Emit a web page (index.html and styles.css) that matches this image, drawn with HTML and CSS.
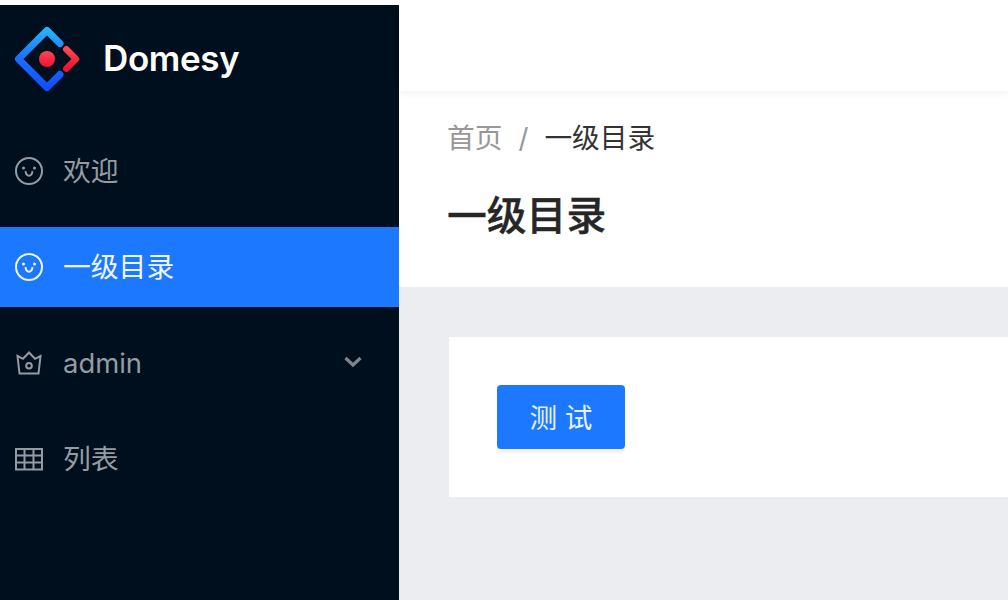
FILE: index.html
```html
<!DOCTYPE html>
<html lang="zh-CN">
<head>
    <meta charset="utf-8">
    <title>Domesy</title>
    <meta name="viewport" content="width=device-width, initial-scale=1">
    <link rel="stylesheet" href="styles.css">
</head>
<body>
    <div class="layout">
        <aside class="sider">
            <div class="logo">
                <svg class="logo-icon" width="66" height="66" viewBox="0 0 66 66" fill="none" stroke-linecap="round" stroke-linejoin="round">
                    <defs>
                        <linearGradient id="blue" x1="0" y1="0" x2="0" y2="1">
                            <stop offset="0" stop-color="#29b0fa"/>
                            <stop offset="0.5" stop-color="#1b6dff"/>
                            <stop offset="1" stop-color="#0f50ff"/>
                        </linearGradient>
                        <linearGradient id="red" x1="0" y1="0" x2="0" y2="1">
                            <stop offset="0" stop-color="#fa4655"/>
                            <stop offset="1" stop-color="#f01130"/>
                        </linearGradient>
                    </defs>
                    <path d="M46 17.500 33 4.500 4.500 33 33 61.500 46 48.500" stroke="url(#blue)" stroke-width="7"/>
                    <path d="M52.300 23.300 62 33 52.300 42.700" stroke="url(#red)" stroke-width="6.500"/>
                    <circle cx="33" cy="33" r="8" fill="url(#red)"/>
                </svg>
                <h1>Domesy</h1>
            </div>
            <ul class="menu">
                <li class="menu-item">
                    <svg class="icon" width="28" height="28" viewBox="0 0 28 28">
                        <circle cx="14" cy="14" r="13"/>
                        <path d="M10.500 14.200c.4 3 1.800 4.600 3.500 4.600s3.100-1.600 3.500-4.600"/>
                        <circle class="dot" cx="8.500" cy="11" r="1.500"/>
                        <circle class="dot" cx="19.500" cy="11" r="1.500"/>
                    </svg>
                    <span>欢迎</span>
                </li>
                <li class="menu-item selected">
                    <svg class="icon" width="28" height="28" viewBox="0 0 28 28">
                        <circle cx="14" cy="14" r="13"/>
                        <path d="M10.500 14.200c.4 3 1.800 4.600 3.500 4.600s3.100-1.600 3.500-4.600"/>
                        <circle class="dot" cx="8.500" cy="11" r="1.500"/>
                        <circle class="dot" cx="19.500" cy="11" r="1.500"/>
                    </svg>
                    <span>一级目录</span>
                </li>
                <li class="menu-item">
                    <svg class="icon" width="28" height="28" viewBox="0 0 28 28">
                        <path d="M2.500 7 8 9.800 14 3.500l6 6.300L25.500 7l-2 17.500h-19z"/>
                        <circle cx="14" cy="16.800" r="2.800"/>
                    </svg>
                    <span class="latin">admin</span>
                    <svg class="arrow" width="20" height="14" viewBox="0 0 20 14">
                        <path d="m2.500 3 7.500 7L17.500 3"/>
                    </svg>
                </li>
                <li class="menu-item">
                    <svg class="icon" width="28" height="28" viewBox="0 0 28 28">
                        <path d="M1 4h26v20.500H1zM1 10.500h26M1 17.500h26M9.500 4v20.500M18.500 4v20.500"/>
                    </svg>
                    <span>列表</span>
                </li>
            </ul>
        </aside>
        <div class="main">
            <header class="header"></header>
            <div class="page-header">
                <div class="breadcrumb">
                    <span>首页</span>
                    <span class="separator">/</span>
                    <span class="current">一级目录</span>
                </div>
                <h2>一级目录</h2>
            </div>
            <div class="content">
                <div class="card">
                    <button class="button">测 试</button>
                </div>
            </div>
        </div>
    </div>
</body>
</html>
```
FILE: styles.css
```css
* {
    box-sizing: border-box;
}
body {
    margin: 0;
    padding-top: 5px;
    background-color: #fff;
    font-family: Inter, "Noto Sans CJK SC", sans-serif;
    font-size: 28px;
}
.layout {
    display: flex;
    height: 595px;
    overflow: hidden;
}
.sider {
    flex: none;
    width: 399px;
    background-color: #000f1d;
}
.logo {
    display: flex;
    align-items: center;
    height: 108px;
    padding-left: 14px;
}
.logo h1 {
    margin: 0 0 2px 23px;
    color: #fff;
    font-size: 35px;
    font-weight: 600;
    letter-spacing: -0.4px;
}
.menu {
    margin: 18px 0 0;
    padding: 0;
    list-style: none;
}
.menu-item {
    display: flex;
    align-items: center;
    height: 80px;
    margin-bottom: 16px;
    padding: 0 36px 0 15px;
    color: #959ba1;
}
.menu-item span {
    margin-left: 20px;
    font-size: 27.8px;
    line-height: 40px;
}
.menu-item .latin {
    font-size: 27.4px;
}
.selected {
    background-color: #1b78ff;
    color: #f0f6ff;
}
.icon {
    fill: none;
    stroke: currentColor;
    stroke-width: 2;
}
.icon .dot {
    fill: currentColor;
    stroke: none;
}
.arrow {
    margin: 0 0 2px auto;
    fill: none;
    stroke: #7b838b;
    stroke-width: 3.2;
}
.main {
    display: flex;
    flex: 1;
    flex-direction: column;
    background-color: #ebedf1;
}
.header {
    position: relative;
    height: 86px;
    background-color: #fff;
    box-shadow: 0 2px 8px rgba(0, 21, 41, 0.06);
}
.page-header {
    height: 196px;
    padding: 25px 48px 0;
    background-color: #fff;
}
.breadcrumb {
    display: flex;
    height: 44px;
    color: #979797;
    font-size: 27.7px;
    line-height: 44px;
}
.separator {
    margin: 0 16px;
}
.current {
    color: #333;
}
.page-header h2 {
    margin: 24px 0 0;
    color: #262626;
    font-size: 39.8px;
    font-weight: 500;
    line-height: 64px;
    -webkit-text-stroke: 0.4px #262626;
}
.content {
    padding: 50px 0 0 50px;
}
.card {
    height: 160px;
    padding: 48px;
    background-color: #fff;
}
.button {
    display: block;
    width: 128px;
    height: 64px;
    padding: 0 0 2px;
    border: none;
    border-radius: 4px;
    background-color: #1b78ff;
    box-shadow: 0 4px 0 rgba(0, 0, 0, 0.045);
    color: #e8f1ff;
    font-family: inherit;
    font-size: 27.6px;
}
```
